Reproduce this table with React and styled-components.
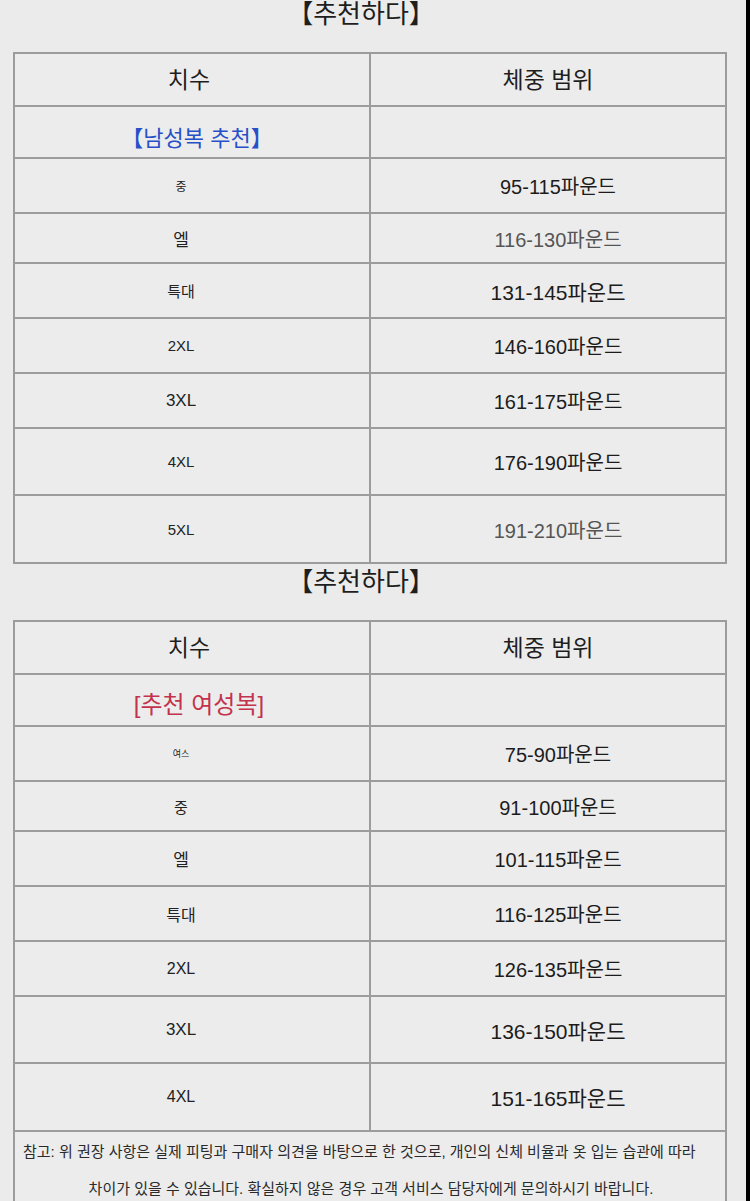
import React from "react";
import styled, { createGlobalStyle } from "styled-components";

const GlobalStyle = createGlobalStyle`
  html, body {
    margin: 0;
    padding: 0;
    background: #000;
  }
  body {
    font-family: "Liberation Sans", "Noto Sans CJK KR", sans-serif;
  }
`;

const menRows = [
  { size: "중", sizeFont: 12, weight: "95-115파운드", weightFont: 20, height: 55 },
  { size: "엘", sizeFont: 17, weight: "116-130파운드", weightFont: 20, height: 50, faded: true },
  { size: "특대", sizeFont: 15, weight: "131-145파운드", weightFont: 21, height: 55 },
  { size: "2XL", sizeFont: 15, weight: "146-160파운드", weightFont: 20, height: 55 },
  { size: "3XL", sizeFont: 17, weight: "161-175파운드", weightFont: 20, height: 55 },
  { size: "4XL", sizeFont: 15, weight: "176-190파운드", weightFont: 20, height: 67 },
  { size: "5XL", sizeFont: 15, weight: "191-210파운드", weightFont: 20, height: 68, faded: true },
];

const womenRows = [
  { size: "여스", sizeFont: 9, weight: "75-90파운드", weightFont: 20, height: 55 },
  { size: "중", sizeFont: 15, weight: "91-100파운드", weightFont: 20, height: 50 },
  { size: "엘", sizeFont: 17, weight: "101-115파운드", weightFont: 20, height: 55 },
  { size: "특대", sizeFont: 16, weight: "116-125파운드", weightFont: 20, height: 55 },
  { size: "2XL", sizeFont: 16, weight: "126-135파운드", weightFont: 20, height: 55 },
  { size: "3XL", sizeFont: 17, weight: "136-150파운드", weightFont: 21, height: 67 },
  { size: "4XL", sizeFont: 16, weight: "151-165파운드", weightFont: 21, height: 68 },
];

const SizeTable = ({ label, tone, rows, note }) => (
  <Table>
    <colgroup>
      <col style={{ width: "50%" }} />
      <col style={{ width: "50%" }} />
    </colgroup>
    <tbody>
      <Row $h={53}>
        <HeadCell>치수</HeadCell>
        <HeadCell>체중 범위</HeadCell>
      </Row>
      <Row $h={52}>
        <LabelCell $tone={tone}>{label}</LabelCell>
        <Cell />
      </Row>
      {rows.map((r) => (
        <Row key={r.weight} $h={r.height}>
          <SizeCell $fs={r.sizeFont}>{r.size}</SizeCell>
          <WeightCell $fs={r.weightFont} $faded={r.faded}>
            {r.weight}
          </WeightCell>
        </Row>
      ))}
      {note && (
        <tr>
          <NoteCell colSpan={2}>{note}</NoteCell>
        </tr>
      )}
    </tbody>
  </Table>
);

const App = () => (
  <Page>
    <GlobalStyle />
    <Title $h={52} $pad={0}>【추천하다】</Title>
    <SizeTable label="【남성복 추천】" tone="blue" rows={menRows} />
    <Title $h={56} $pad={4}>【추천하다】</Title>
    <SizeTable
      label="[추천 여성복]"
      tone="red"
      rows={womenRows}
      note={
        <>
          <NoteLine $align="left">
            참고: 위 권장 사항은 실제 피팅과 구매자 의견을 바탕으로 한 것으로, 개인의 신체 비율과 옷 입는 습관에 따라
          </NoteLine>
          <NoteLine $align="center">
            차이가 있을 수 있습니다. 확실하지 않은 경우 고객 서비스 담당자에게 문의하시기 바랍니다.
          </NoteLine>
        </>
      }
    />
  </Page>
);

const Page = styled.div`
  width: 746px;
  height: 1201px;
  overflow: hidden;
  background: #ebebeb;
  color: #222;
  padding-left: 13px;
  box-sizing: border-box;
`;

const Title = styled.div`
  height: ${({ $h }) => $h}px;
  width: 714px;
  box-sizing: border-box;
  padding-top: ${({ $pad }) => $pad}px;
  padding-right: 18px;
  text-align: center;
  font-size: 26px;
  line-height: 28px;
  color: #1e1e1e;
`;

const Table = styled.table`
  width: 714px;
  border-collapse: collapse;
  table-layout: fixed;
  background: #ececec;
`;

const Row = styled.tr`
  height: ${({ $h }) => $h}px;
`;

const Cell = styled.td`
  border: 2px solid #9c9c9c;
  padding: 0;
  vertical-align: middle;
  text-align: center;
`;

const HeadCell = styled(Cell)`
  font-size: 23px;
  padding-bottom: 4px;
  color: #1e1e1e;
  &:first-child {
    padding-right: 6px;
  }
`;

const SizeCell = styled(Cell)`
  font-size: ${({ $fs }) => $fs}px;
  padding-right: 22px;
  color: #222;
`;

const WeightCell = styled(Cell)`
  font-size: ${({ $fs }) => $fs}px;
  padding-left: 20px;
  color: ${({ $faded }) => ($faded ? "#555" : "#1c1c1c")};
`;

const LabelCell = styled(Cell)`
  font-size: ${({ $tone }) => ($tone === "blue" ? 22 : 24)}px;
  padding-top: ${({ $tone }) => ($tone === "blue" ? 7 : 4)}px;
  padding-left: ${({ $tone }) => ($tone === "blue" ? 10 : 14)}px;
  color: ${({ $tone }) => ($tone === "blue" ? "#2750c8" : "#c3334b")};
`;

const NoteCell = styled(Cell)`
  padding: 1px 6px 0 8px;
  vertical-align: top;
  height: 80px;
`;

const NoteLine = styled.div`
  font-size: 15px;
  line-height: 37px;
  white-space: nowrap;
  text-align: ${({ $align }) => $align};
  color: #2a2a2a;
`;

export default App;
